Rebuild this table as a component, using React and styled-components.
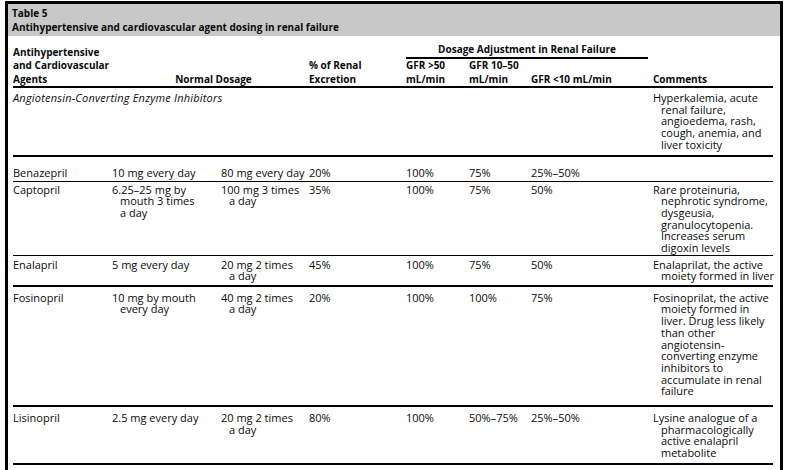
import React from "react";
import styled, { createGlobalStyle } from "styled-components";

const COLS = "99px 109px 88px 97px 63px 62px 122px 120px";

const GlobalStyle = createGlobalStyle`
  html, body { margin: 0; padding: 0; background: #fff; overflow: hidden; }
  body { font-family: "Open Sans", "Noto Sans", sans-serif; color: #0a0a0a; }
`;

const Frame = styled.div`
  margin: 1px 0 0 5px;
  width: 778px;
  box-sizing: border-box;
  border: 3px solid #000;
  padding-bottom: 30px;
`;

const TitleBar = styled.div`
  background: #c8c8c8;
  padding: 2px 4px;
  font-weight: 700;
  font-size: 10px;
  line-height: 14px;
`;

const TableBody = styled.div`
  padding: 0 7px 0 5px;
`;

const HeadGrid = styled.div`
  display: grid;
  grid-template-columns: ${COLS};
  grid-template-rows: auto auto;
  padding-top: 6.5px;
  border-bottom: 2px solid #000;
  font-weight: 700;
  font-size: 10px;
  line-height: 13.5px;
`;

const HeadCell = styled.div`
  grid-column: ${(p) => p.$col};
  grid-row: ${(p) => p.$row};
  align-self: end;
  text-align: ${(p) => p.$align || "left"};
  padding-left: ${(p) => p.$indent || 0}px;
  white-space: nowrap;
`;

const SpanHead = styled.div`
  grid-column: 5 / span 3;
  grid-row: 1;
  text-align: center;
  border-bottom: 2px solid #000;
  margin-right: 5px;
  padding-bottom: 1px;
  white-space: nowrap;
`;

const Row = styled.div`
  display: grid;
  grid-template-columns: ${COLS};
  padding: ${(p) => p.$pt}px 0 ${(p) => p.$pb}px;
  border-bottom: ${(p) => p.$rule}px solid #000;
  font-size: 11px;
  line-height: 11.7px;
`;

const Cell = styled.div`
  grid-column: ${(p) => p.$col || "auto"};
  padding-left: 8px;
  text-indent: -8px;
  white-space: nowrap;
`;

const GroupCell = styled(Cell)`
  font-style: italic;
  letter-spacing: 0.2px;
`;

const lines = (arr) =>
  arr.map((t, i) => (
    <React.Fragment key={i}>
      {i > 0 && <br />}
      {t}
    </React.Fragment>
  ));

const rows = [
  {
    group: "Angiotensin-Converting Enzyme Inhibitors",
    comments: ["Hyperkalemia, acute", "renal failure,", "angioedema, rash,", "cough, anemia, and", "liver toxicity"],
    rule: 2,
    pt: 4,
    pb: 4.5,
  },
  {
    cells: [["Benazepril"], ["10 mg every day"], ["80 mg every day"], ["20%"], ["100%"], ["75%"], ["25%–50%"]],
    comments: [],
    rule: 1,
    pt: 10,
    pb: 2.3,
  },
  {
    cells: [["Captopril"], ["6.25–25 mg by", "mouth 3 times", "a day"], ["100 mg 3 times", "a day"], ["35%"], ["100%"], ["75%"], ["50%"]],
    comments: ["Rare proteinuria,", "nephrotic syndrome,", "dysgeusia,", "granulocytopenia.", "Increases serum", "digoxin levels"],
    rule: 1,
    pt: 1.5,
    pb: 1,
  },
  {
    cells: [["Enalapril"], ["5 mg every day"], ["20 mg 2 times", "a day"], ["45%"], ["100%"], ["75%"], ["50%"]],
    comments: ["Enalaprilat, the active", "moiety formed in liver"],
    rule: 2,
    pt: 3,
    pb: 2.6,
  },
  {
    cells: [["Fosinopril"], ["10 mg by mouth", "every day"], ["40 mg 2 times", "a day"], ["20%"], ["100%"], ["100%"], ["75%"]],
    comments: [
      "Fosinoprilat, the active",
      "moiety formed in",
      "liver. Drug less likely",
      "than other",
      "angiotensin-",
      "converting enzyme",
      "inhibitors to",
      "accumulate in renal",
      "failure",
    ],
    rule: 2,
    pt: 5,
    pb: 8,
  },
  {
    cells: [["Lisinopril"], ["2.5 mg every day"], ["20 mg 2 times", "a day"], ["80%"], ["100%"], ["50%–75%"], ["25%–50%"]],
    comments: ["Lysine analogue of a", "pharmacologically", "active enalapril", "metabolite"],
    rule: 2,
    pt: 5,
    pb: 4.5,
  },
];

export default function App() {
  return (
    <>
      <GlobalStyle />
      <Frame>
        <TitleBar>
          Table 5
          <br />
          Antihypertensive and cardiovascular agent dosing in renal failure
        </TitleBar>
        <TableBody>
          <HeadGrid>
            <HeadCell $col="1" $row="1 / span 2">
              Antihypertensive
              <br />
              and Cardiovascular
              <br />
              Agents
            </HeadCell>
            <HeadCell $col="2 / span 2" $row="1 / span 2" $align="center" $indent={6}>
              Normal Dosage
            </HeadCell>
            <HeadCell $col="4" $row="1 / span 2">
              % of Renal
              <br />
              Excretion
            </HeadCell>
            <SpanHead>Dosage Adjustment in Renal Failure</SpanHead>
            <HeadCell $col="5" $row="2">
              GFR &gt;50
              <br />
              mL/min
            </HeadCell>
            <HeadCell $col="6" $row="2">
              GFR 10–50
              <br />
              mL/min
            </HeadCell>
            <HeadCell $col="7" $row="2">
              GFR &lt;10 mL/min
            </HeadCell>
            <HeadCell $col="8" $row="1 / span 2">
              Comments
            </HeadCell>
          </HeadGrid>
          {rows.map((r, i) => (
            <Row key={i} $rule={r.rule} $pt={r.pt} $pb={r.pb}>
              {r.group ? (
                <GroupCell $col="1 / span 7">{r.group}</GroupCell>
              ) : (
                r.cells.map((c, j) => <Cell key={j}>{lines(c)}</Cell>)
              )}
              <Cell $col="8">{lines(r.comments)}</Cell>
            </Row>
          ))}
        </TableBody>
      </Frame>
    </>
  );
}
